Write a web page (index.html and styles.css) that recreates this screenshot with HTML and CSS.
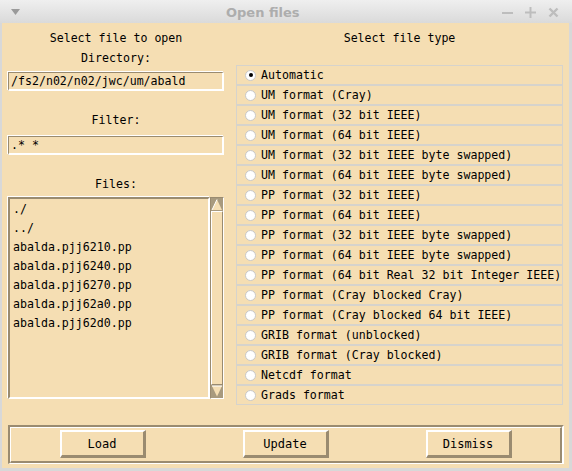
FILE: index.html
```html
<!DOCTYPE html>
<html>
<head>
<meta charset="utf-8">
<link rel="stylesheet" href="styles.css">
</head>
<body>
<div class="window">
  <div class="titlebar">
    <svg class="menu-arrow" width="9" height="6" viewBox="0 0 9 6"><polygon points="0,0 9,0 4.5,6" fill="#9a9a9a"/></svg>
    <div class="title">Open files</div>
    <div class="controls">
      <svg width="11" height="11" viewBox="0 0 11 11"><rect x="0" y="5" width="11" height="2" fill="#bdbdbd"/></svg>
      <svg width="11" height="11" viewBox="0 0 11 11"><rect x="0" y="4.5" width="11" height="2" fill="#bdbdbd"/><rect x="4.5" y="0" width="2" height="11" fill="#bdbdbd"/></svg>
      <svg width="11" height="11" viewBox="0 0 11 11"><path d="M1.5 1.5 L9.5 9.5 M9.5 1.5 L1.5 9.5" stroke="#bdbdbd" stroke-width="2.4"/></svg>
    </div>
  </div>
  <div class="content">
    <div class="top">
      <div class="left">
        <div class="label">Select file to open</div>
        <div class="label">Directory:</div>
        <div class="entry entry-dir">/fs2/n02/n02/jwc/um/abald</div>
        <div class="label label-filter">Filter:</div>
        <div class="entry entry-filter">.* *</div>
        <div class="label label-files">Files:</div>
        <div class="listwrap">
          <div class="listbox">
            <div class="item">./</div>
            <div class="item">../</div>
            <div class="item">abalda.pjj6210.pp</div>
            <div class="item">abalda.pjj6240.pp</div>
            <div class="item">abalda.pjj6270.pp</div>
            <div class="item">abalda.pjj62a0.pp</div>
            <div class="item">abalda.pjj62d0.pp</div>
          </div>
          <div class="scrollbar">
            <svg class="arrow" width="12" height="13" viewBox="0 0 12 13"><rect x="0" y="0" width="12" height="13" fill="#a89a7e"/><polygon points="6,1.5 11,12 1,12" fill="#f5deb3"/><path d="M1 12 L6 1.5" stroke="#ffffff" stroke-width="1"/></svg>
            <div class="thumb"></div>
            <svg class="arrow" width="12" height="13" viewBox="0 0 12 13"><rect x="0" y="0" width="12" height="13" fill="#a89a7e"/><polygon points="1,1 11,1 6,11.5" fill="#f5deb3"/><path d="M1 1 L11 1" stroke="#ffffff" stroke-width="1"/></svg>
          </div>
        </div>
      </div>
      <div class="right">
        <div class="label">Select file type</div>
        <div class="radios">
          <div class="row"><span class="radio checked"></span>Automatic</div>
          <div class="row"><span class="radio"></span>UM format (Cray)</div>
          <div class="row"><span class="radio"></span>UM format (32 bit IEEE)</div>
          <div class="row"><span class="radio"></span>UM format (64 bit IEEE)</div>
          <div class="row"><span class="radio"></span>UM format (32 bit IEEE byte swapped)</div>
          <div class="row"><span class="radio"></span>UM format (64 bit IEEE byte swapped)</div>
          <div class="row"><span class="radio"></span>PP format (32 bit IEEE)</div>
          <div class="row"><span class="radio"></span>PP format (64 bit IEEE)</div>
          <div class="row"><span class="radio"></span>PP format (32 bit IEEE byte swapped)</div>
          <div class="row"><span class="radio"></span>PP format (64 bit IEEE byte swapped)</div>
          <div class="row"><span class="radio"></span>PP format (64 bit Real 32 bit Integer IEEE)</div>
          <div class="row"><span class="radio"></span>PP format (Cray blocked Cray)</div>
          <div class="row"><span class="radio"></span>PP format (Cray blocked 64 bit IEEE)</div>
          <div class="row"><span class="radio"></span>GRIB format (unblocked)</div>
          <div class="row"><span class="radio"></span>GRIB format (Cray blocked)</div>
          <div class="row"><span class="radio"></span>Netcdf format</div>
          <div class="row"><span class="radio"></span>Grads format</div>
        </div>
      </div>
    </div>
    <div class="buttonbar">
      <div class="buttonbar-inner">
        <div class="cell"><div class="btn">Load</div></div>
        <div class="cell"><div class="btn">Update</div></div>
        <div class="cell"><div class="btn">Dismiss</div></div>
      </div>
    </div>
  </div>
</div>
</body>
</html>
```
FILE: styles.css
```css
html, body {
  margin: 0;
  padding: 0;
  background: #d6d6d6;
}
.window {
  width: 572px;
  height: 471px;
  background: #d8d8d8;
  box-sizing: border-box;
  padding: 0 3px 3px 2px;
  display: flex;
  flex-direction: column;
}
.titlebar {
  height: 23px;
  margin: 0 -3px 0 -2px;
  background: linear-gradient(#efefef, #dadada);
  display: flex;
  align-items: center;
  flex-shrink: 0;
}
.menu-arrow {
  margin-left: 11px;
  margin-top: 1px;
}
.title {
  margin-left: 206px;
  font-family: "DejaVu Sans", sans-serif;
  font-weight: bold;
  font-size: 13px;
  color: #adadad;
  margin-top: 1px;
}
.controls {
  margin-left: auto;
  margin-right: 13px;
  display: flex;
  gap: 12px;
  align-items: center;
  margin-top: 1px;
}
.content {
  flex: 1;
  background: #f5deb3;
  padding: 5px 5px 0 6px;
  font-family: "DejaVu Sans Mono", monospace;
  font-size: 11.6px;
  color: #000;
  display: flex;
  flex-direction: column;
}
.top {
  display: flex;
  gap: 12px;
}
.left {
  width: 216px;
  display: flex;
  flex-direction: column;
}
.label {
  height: 20px;
  line-height: 20px;
  text-align: center;
  white-space: pre;
}
.entry {
  height: 19px;
  box-sizing: border-box;
  border-style: solid;
  border-width: 1px 2px 2px 1px;
  border-color: #9a8b70 #ffffff #ffffff #9a8b70;
  box-shadow: -1px -1px 0 #ffffff;
  line-height: 16px;
  padding-left: 2px;
  white-space: pre;
}
.entry-dir {
  margin-top: 4px;
}
.label-filter {
  margin-top: 19px;
}
.entry-filter {
  margin-top: 6px;
}
.label-files {
  margin-top: 19px;
}
.listwrap {
  margin-top: 3px;
  height: 202px;
  display: flex;
}
.listbox {
  flex: 1;
  box-sizing: border-box;
  border-style: solid;
  border-width: 2px 2px 2px 2px;
  border-color: #9a8b70 #ffffff #ffffff #9a8b70;
  box-shadow: -1px -1px 0 #ffffff;
  padding: 1px 0 0 3px;
}
.item {
  height: 19px;
  line-height: 19px;
  white-space: pre;
}
.scrollbar {
  width: 14px;
  box-sizing: border-box;
  border-style: solid;
  border-width: 1px;
  border-color: #9a8b70 #ffffff #ffffff #9a8b70;
  display: flex;
  flex-direction: column;
}
.arrow {
  display: block;
  flex-shrink: 0;
}
.thumb {
  flex: 1;
  box-sizing: border-box;
  border-style: solid;
  border-width: 1px 1px 1px 1px;
  border-color: #ffffff #9a8b70 #9a8b70 #ffffff;
}
.right {
  width: 327px;
  display: flex;
  flex-direction: column;
}
.radios {
  margin-top: 17px;
  display: flex;
  flex-direction: column;
}
.row {
  height: 20px;
  box-sizing: border-box;
  border: 1px solid #d6d3cc;
  display: flex;
  align-items: center;
  white-space: pre;
  padding-left: 8px;
}
.radio {
  width: 11px;
  height: 11px;
  box-sizing: border-box;
  border-radius: 50%;
  background: #ffffff;
  border: 1px solid #c8c8c8;
  margin-right: 5px;
  display: flex;
  align-items: center;
  justify-content: center;
}
.radio.checked::after {
  content: "";
  width: 4px;
  height: 4px;
  border-radius: 50%;
  background: #000;
}
.buttonbar {
  margin-top: 20px;
  width: 556px;
  height: 39px;
  box-sizing: border-box;
  border-style: solid;
  border-width: 2px 2px 1px 2px;
  border-color: #9a8b70 #ffffff #ffffff #9a8b70;
}
.buttonbar-inner {
  height: 100%;
  box-sizing: border-box;
  border-style: solid;
  border-width: 1px 2px 2px 1px;
  border-color: #ffffff #9a8b70 #9a8b70 #ffffff;
  display: grid;
  grid-template-columns: 1fr 1fr 1fr;
  padding-top: 2px;
}
.cell {
  display: flex;
  justify-content: center;
  align-items: flex-start;
}
.btn {
  width: 86px;
  height: 28px;
  box-sizing: border-box;
  border-style: solid;
  border-width: 2px 3px 3px 2px;
  border-color: #ffffff #9a8b70 #9a8b70 #ffffff;
  display: flex;
  align-items: center;
  justify-content: center;
  font-size: 12px;
}
```
